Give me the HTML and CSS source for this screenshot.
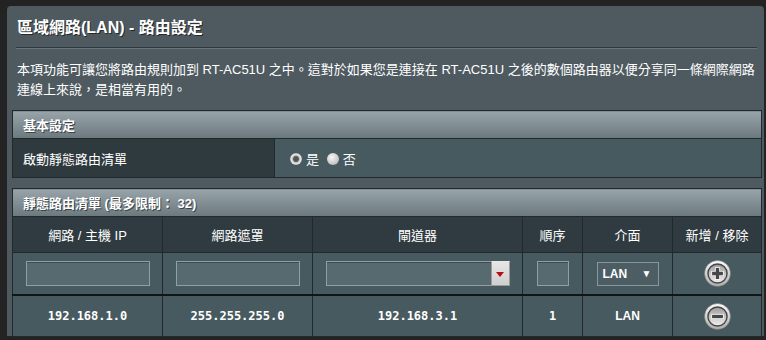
FILE: index.html
```html
<!DOCTYPE html>
<html lang="zh-Hant">

<head>
    <meta charset="UTF-8">
    <meta name="viewport" content="width=device-width, initial-scale=1.0">
    <title>區域網路(LAN) - 路由設定</title>
    <link rel="stylesheet" href="styles.css">
</head>

<body>
    <div class="panel">
        <div class="page-title">區域網路(LAN) - 路由設定</div>
        <div class="divider"></div>
        <p class="desc">本項功能可讓您將路由規則加到 RT-AC51U 之中。這對於如果您是連接在 RT-AC51U 之後的數個路由器以便分享同一條網際網路連線上來說，是相當有用的。</p>

        <table class="form-table">
            <colgroup>
                <col class="w-label">
                <col>
            </colgroup>
            <thead>
                <tr>
                    <th colspan="2">基本設定</th>
                </tr>
            </thead>
            <tbody>
                <tr>
                    <td class="label">啟動靜態路由清單</td>
                    <td class="value">
                        <span class="radio checked"></span><span class="radio-text">是</span>
                        <span class="radio"></span><span class="radio-text">否</span>
                    </td>
                </tr>
            </tbody>
        </table>

        <table class="route-table">
            <colgroup>
                <col class="w-150">
                <col class="w-150">
                <col class="w-210">
                <col class="w-60">
                <col class="w-90">
                <col>
            </colgroup>
            <thead>
                <tr>
                    <th colspan="6" class="group-head">靜態路由清單 (最多限制： 32)</th>
                </tr>
                <tr class="col-head">
                    <th>網路 / 主機 IP</th>
                    <th>網路遮罩</th>
                    <th>閘道器</th>
                    <th>順序</th>
                    <th>介面</th>
                    <th>新增 / 移除</th>
                </tr>
            </thead>
            <tbody>
                <tr class="input-row">
                    <td><input type="text" class="field"></td>
                    <td><input type="text" class="field"></td>
                    <td>
                        <div class="combo">
                            <input type="text" class="field combo-field">
                            <span class="combo-btn"><span class="red-arrow"></span></span>
                        </div>
                    </td>
                    <td><input type="text" class="field small"></td>
                    <td>
                        <div class="iface">
                            <span>LAN</span>
                            <span class="iface-arrow">▼</span>
                        </div>
                    </td>
                    <td>
                        <svg class="icon" width="27" height="27" viewBox="0 0 26 26">
                            <defs>
                                <linearGradient id="ringA" x1="0" y1="0" x2="0" y2="1">
                                    <stop offset="0" stop-color="#fbfbfb" />
                                    <stop offset="1" stop-color="#adadad" />
                                </linearGradient>
                                <linearGradient id="faceA" x1="0" y1="0" x2="0" y2="1">
                                    <stop offset="0" stop-color="#9c9c9c" />
                                    <stop offset="1" stop-color="#f0f0f0" />
                                </linearGradient>
                            </defs>
                            <circle cx="13" cy="13" r="12.5" fill="url(#ringA)" stroke="#6e6e6e" stroke-width="0.5" />
                            <circle cx="13" cy="13" r="9.2" fill="url(#faceA)" stroke="#474747" stroke-width="1.4" />
                            <path d="M13 7v12M7 13h12" stroke="#f6f6f6" stroke-width="5" />
                            <path d="M13 7.8v10.4M7.8 13h10.4" stroke="#474747" stroke-width="3.2" />
                        </svg>
                    </td>
                </tr>
                <tr class="data-row">
                    <td class="mono">192.168.1.0</td>
                    <td class="mono">255.255.255.0</td>
                    <td class="mono">192.168.3.1</td>
                    <td class="mono">1</td>
                    <td class="bold">LAN</td>
                    <td class="act-cell">
                        <svg class="icon" width="27" height="27" viewBox="0 0 26 26">
                            <defs>
                                <linearGradient id="ringB" x1="0" y1="0" x2="0" y2="1">
                                    <stop offset="0" stop-color="#fbfbfb" />
                                    <stop offset="1" stop-color="#adadad" />
                                </linearGradient>
                                <linearGradient id="faceB" x1="0" y1="0" x2="0" y2="1">
                                    <stop offset="0" stop-color="#9c9c9c" />
                                    <stop offset="1" stop-color="#f0f0f0" />
                                </linearGradient>
                            </defs>
                            <circle cx="13" cy="13" r="12.5" fill="url(#ringB)" stroke="#6e6e6e" stroke-width="0.5" />
                            <circle cx="13" cy="13" r="9.2" fill="url(#faceB)" stroke="#474747" stroke-width="1.4" />
                            <path d="M7 13h12" stroke="#f6f6f6" stroke-width="5" />
                            <path d="M7.8 13h10.4" stroke="#474747" stroke-width="3.2" />
                        </svg>
                    </td>
                </tr>
            </tbody>
        </table>
    </div>
</body>

</html>
```

FILE: styles.css
```css
html,
body {
    margin: 0;
    height: 340px;
    overflow: hidden;
}

body {
    background: #232323;
    color: #fff;
    font-family: "Liberation Sans", Arial, "Noto Sans CJK TC", sans-serif;
    font-size: 13px;
}

.panel {
    width: 757px;
    height: 330px;
    margin: 6px 0 0 7px;
    padding: 12px 5px 0;
    box-sizing: border-box;
    background: #4e5a5f;
    border-radius: 4px 4px 0 0;
}

.page-title {
    margin: 0 5px;
    font-size: 16px;
    font-weight: bold;
    line-height: 20px;
    text-shadow: 1px 1px 0 #26292b;
}

.divider {
    margin: 9px 2px 0 4px;
    height: 1px;
    background: #2c3b41;
    box-shadow: 0 1px 0 #67767c;
}

.desc {
    margin: 12px 5px 10px;
    line-height: 20px;
    width: 740px;
}

table {
    width: 750px;
    border-collapse: collapse;
    border: 1px solid #22282b;
    table-layout: fixed;
}

.w-label {
    width: 262px;
}

.w-150 {
    width: 150px;
}

.w-210 {
    width: 210px;
}

.w-60 {
    width: 60px;
}

.w-90 {
    width: 90px;
}

.form-table th,
.route-table .group-head {
    height: 27px;
    padding: 0 10px;
    text-align: left;
    font-weight: bold;
    background: linear-gradient(to bottom, #98a4a9, #6b787d);
    text-shadow: 1px 1px 0 #3b4347;
    border-bottom: 1px solid #22282b;
}

.form-table td {
    height: 38px;
    padding: 0 10px;
}

.form-table .label {
    background: #2f3a3e;
    border-right: 1px solid #22282b;
}

.form-table .value {
    background: #475a60;
    padding-left: 15px;
}

.radio {
    display: inline-block;
    width: 12px;
    height: 12px;
    border-radius: 50%;
    vertical-align: -1px;
    background: radial-gradient(circle at 40% 35%, #f7f7f7, #c3c3c3 70%, #9a9a9a);
}

.radio.checked {
    background: radial-gradient(circle, #4f4f4f 0, #5a5a5a 2.5px, #bdbdbd 3.5px, #efefef 5px, #a7a7a7 6px);
}

.radio-text {
    margin: 0 4px 0 4px;
}

.route-table {
    margin-top: 10px;
}

.col-head th {
    height: 35px;
    padding: 0;
    font-weight: normal;
    text-align: center;
    background: #2f3b40;
    border-right: 1px solid #22282b;
    border-bottom: 1px solid #22282b;
}

.route-table td {
    padding: 0;
    text-align: center;
    background: #475a60;
    border-right: 1px solid #22282b;
}

.input-row td {
    height: 41px;
    border-bottom: 2px solid #111516;
}

.data-row td {
    height: 40px;
}

.field {
    width: 124px;
    height: 25px;
    margin: 0;
    padding: 0 4px;
    box-sizing: border-box;
    background: #576a70;
    border: 1px solid #939ea2;
    box-shadow: inset 0 1px 0 #3e4b50;
    color: #fff;
    vertical-align: middle;
}

.field.small {
    width: 32px;
}

.combo {
    display: inline-flex;
    vertical-align: middle;
}

.combo-field {
    width: 165px;
    border-right: none;
}

.combo-btn {
    width: 19px;
    height: 25px;
    box-sizing: border-box;
    border: 1px solid #9b9b9b;
    border-top-color: #e8e8e8;
    background: linear-gradient(to bottom, #e6e6e6, #cfcfcf);
    display: flex;
    align-items: center;
    justify-content: center;
}

.red-arrow {
    width: 0;
    height: 0;
    border-left: 4px solid transparent;
    border-right: 4px solid transparent;
    border-top: 5px solid #b80d0d;
    margin-top: 2px;
}

.iface {
    display: inline-flex;
    align-items: center;
    justify-content: space-between;
    width: 62px;
    height: 24px;
    padding: 0 6px 0 5px;
    box-sizing: border-box;
    background: #4c5e64;
    border: 1px solid #88959a;
    font-weight: bold;
    font-size: 12px;
    vertical-align: middle;
}

.iface-arrow {
    font-size: 10px;
}

.icon {
    display: block;
    margin: 0 auto;
}

.act-cell {
    background: linear-gradient(to right, #475a60 7px, #4a545a 7px, #4a545a 71px, #475a60 71px);
}

.mono {
    font-family: "DejaVu Sans Mono", "Liberation Mono", monospace;
    font-size: 12px;
    font-weight: bold;
}

.bold {
    font-weight: bold;
    font-size: 12px;
}
```
